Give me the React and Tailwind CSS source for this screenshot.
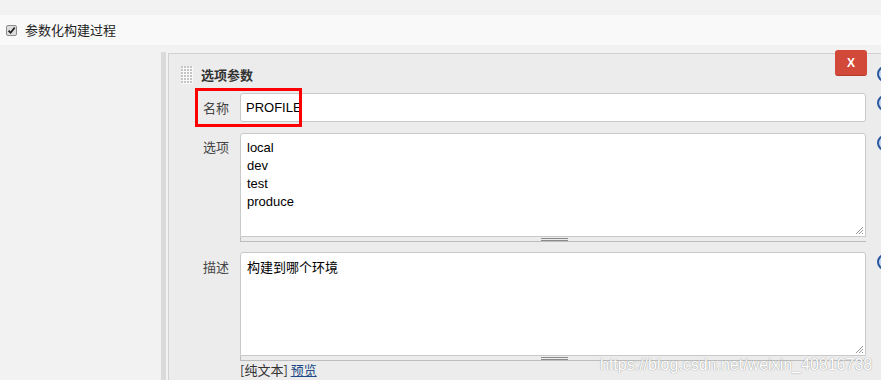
import React from "react";

function Help() {
  return (
    <div className="w-[16px] h-[16px] shrink-0 rounded-full border-2 border-[#2a58a0] bg-[#c9dbf1]" />
  );
}

function Grip() {
  const dots = [];
  for (let r = 0; r < 6; r++) {
    for (let c = 0; c < 4; c++) {
      dots.push(<rect key={r + "-" + c} x={c * 3} y={r * 3} width="2" height="2" fill="#c4c4c4" />);
    }
  }
  return (
    <svg width="12" height="18" viewBox="0 0 12 18" className="shrink-0">
      <rect x="0" y="0" width="12" height="18" fill="#fafafa" />
      {dots}
    </svg>
  );
}

function Corner() {
  return (
    <svg width="8" height="8" viewBox="0 0 8 8" className="absolute right-[2px] bottom-[2px]">
      <line x1="1" y1="8" x2="8" y2="1" stroke="#777" strokeWidth="0.8" />
      <line x1="4" y1="8" x2="8" y2="4" stroke="#777" strokeWidth="0.8" />
      <line x1="7" y1="8" x2="8" y2="7" stroke="#777" strokeWidth="0.8" />
    </svg>
  );
}

function Handle() {
  return (
    <div className="relative h-[5px] w-[626px] bg-[#ececec] border-b border-l border-[#bdbdbd]">
      <div className="absolute left-[300px] top-[1px] w-[27px] h-[3px] border-t border-b border-[#8a8a8a]" />
    </div>
  );
}

export default function App() {
  return (
    <div className="relative w-[881px] h-[380px] overflow-hidden bg-[#f2f2f2] font-['Liberation_Sans','Noto_Sans_CJK_SC',sans-serif] text-[13px] text-[#333]">
      <div className="h-[15px]" />
      <div className="h-[30px] bg-[#f9f9f9] flex items-center pl-[6px] gap-[8px]">
        <svg width="11" height="11" viewBox="0 0 11 11" className="shrink-0">
          <rect x="0.5" y="0.5" width="10" height="10" rx="1.5" fill="#dedede" stroke="#8c8c8c" />
          <path d="M2.5 5.6 L4.6 7.8 L8.7 2.6" fill="none" stroke="#222" strokeWidth="1.7" />
        </svg>
        <span className="font-['Noto_Sans_CJK_SC',sans-serif] text-[13px] text-[#222]">参数化构建过程</span>
      </div>
      <div className="flex pt-[7px]">
        <div className="w-[161px] shrink-0" />
        <div className="w-[5px] shrink-0 bg-[#dadada] h-[340px]" />
        <div className="w-[2px] shrink-0" />
        <div className="mt-[1px] flex-1 h-[340px] border-l border-t border-[#d2d2d2] bg-[#ececec]">
          {/* header */}
          <div className="mt-[12px] flex items-center h-[18px]">
            <div className="w-[697px] shrink-0 flex items-center pl-[12px] gap-[8px]">
              <Grip />
              <span className="font-['Noto_Sans_CJK_SC',sans-serif] font-bold text-[13px] text-[#333]">选项参数</span>
            </div>
            <div className="ml-[11px] -mt-[2px]">
              <Help />
            </div>
          </div>
          {/* name */}
          <div className="mt-[9px] flex">
            <div className="w-[71px] shrink-0 flex items-center justify-end pr-[11px] font-['Noto_Sans_CJK_SC',sans-serif] text-[#444]">名称</div>
            <div className="w-[626px] h-[29px] shrink-0 bg-white border border-[#c9c9c9] rounded-[3px] flex items-center pl-[5px] text-[13px] text-black">
              PROFILE
            </div>
            <div className="ml-[11px] mt-[2px]">
              <Help />
            </div>
          </div>
          {/* options */}
          <div className="mt-[11px] flex">
            <div className="w-[71px] shrink-0 text-right pr-[11px] pt-[5px] leading-[18px] font-['Noto_Sans_CJK_SC',sans-serif] text-[#444]">选项</div>
            <div className="w-[626px] shrink-0">
              <div className="relative h-[104px] bg-white border border-[#c9c9c9] rounded-t-[3px] pl-[6px] pt-[5px] leading-[18px] text-black">
                <div>local</div>
                <div>dev</div>
                <div>test</div>
                <div>produce</div>
                <Corner />
              </div>
              <Handle />
            </div>
            <div className="ml-[11px] mt-[2px]">
              <Help />
            </div>
          </div>
          {/* description */}
          <div className="mt-[10px] flex">
            <div className="w-[71px] shrink-0 text-right pr-[11px] pt-[6px] leading-[18px] font-['Noto_Sans_CJK_SC',sans-serif] text-[#444]">描述</div>
            <div className="w-[626px] shrink-0">
              <div className="relative h-[104px] bg-white border border-[#c9c9c9] rounded-t-[3px] pl-[6px] pt-[5px] leading-[18px] text-black font-['Noto_Sans_CJK_SC',sans-serif]">
                构建到哪个环境
                <Corner />
              </div>
              <Handle />
              <div className="mt-[1px] leading-[16px] font-['Noto_Sans_CJK_SC',sans-serif] text-[#333]">
                [纯文本] <span className="text-[#204a87] underline">预览</span>
              </div>
            </div>
            <div className="ml-[11px] mt-[2px]">
              <Help />
            </div>
          </div>
        </div>
      </div>

      {/* delete button */}
      <div className="absolute left-[835px] top-[50px] w-[32px] h-[26px] rounded-[3px] bg-[#d24939] border-b border-[#b53a2c] flex items-center justify-center text-white font-bold text-[12px]">
        X
      </div>

      {/* highlight box */}
      <div className="absolute left-[195px] top-[88px] w-[107px] h-[39px] border-[3px] border-[#ff0000]" />

      {/* watermark */}
      <div className="absolute left-[600px] top-[356px] text-[16px] leading-[18px] text-white [text-shadow:0_0_1px_#a0a0a0,0_0_1px_#a0a0a0] font-['Liberation_Sans',sans-serif] whitespace-nowrap">
        https://blog.csdn.net/weixin_40816738
      </div>
    </div>
  );
}
